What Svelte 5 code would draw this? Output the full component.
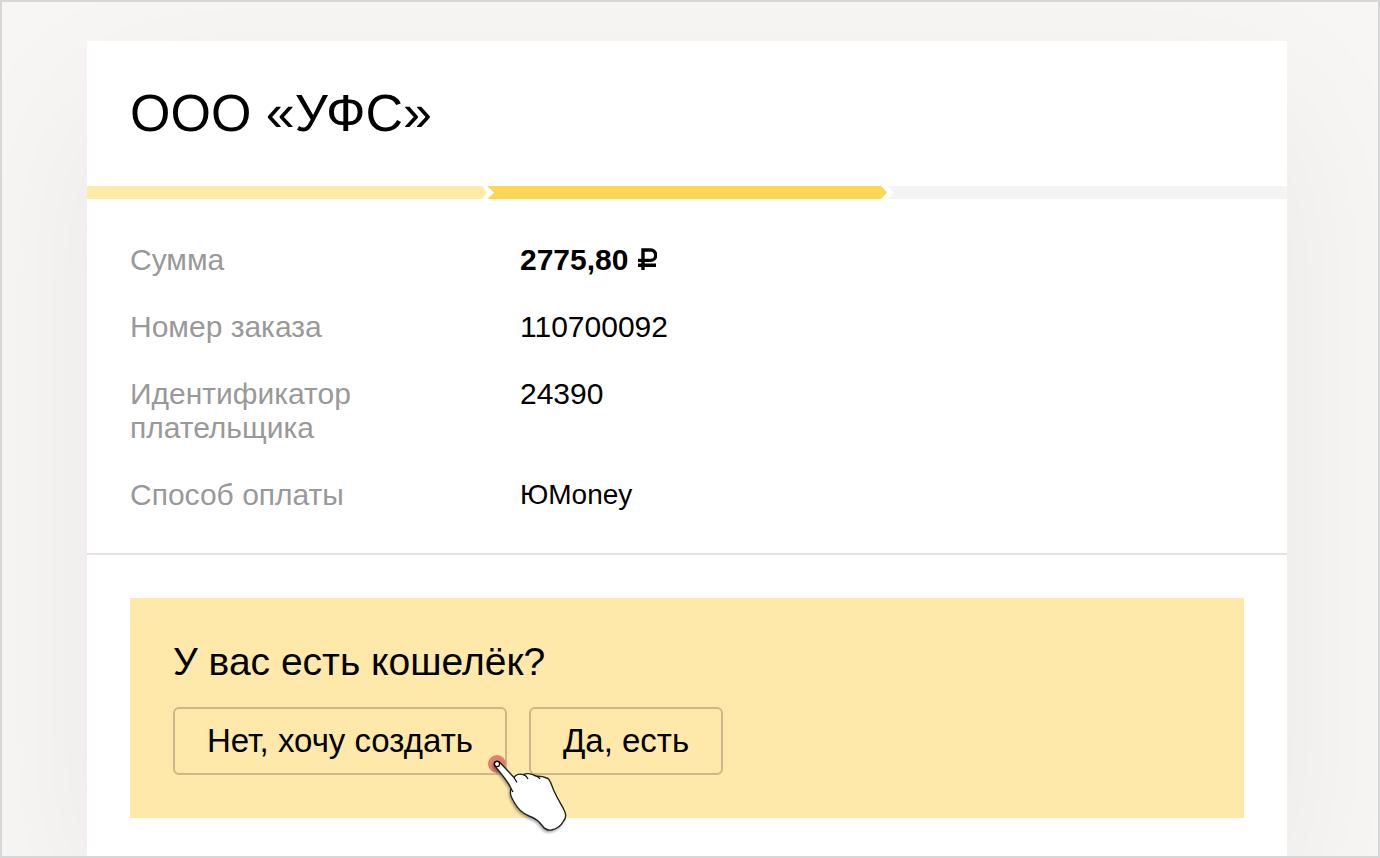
<script lang="ts">
	type Row = {
		label: string;
		value: string;
		kind?: string;
	};

	const rows: Array<Row> = [
		{ label: 'Сумма', value: '2775,80', kind: 'sum' },
		{ label: 'Номер заказа', value: '110700092' },
		{ label: 'Идентификатор плательщика', value: '24390' },
		{ label: 'Способ оплаты', value: 'ЮMoney', kind: 'method' }
	];
</script>

<div class="page">
	<main class="card">
		<header>
			<h1>ООО «УФС»</h1>
		</header>

		<div class="steps">
			<span class="step done"></span>
			<span class="step current"></span>
			<span class="step"></span>
		</div>

		<dl>
			{#each rows as row (row.label)}
				<dt>{row.label}</dt>
				<dd class={row.kind}>
					{row.value}
					{#if row.kind === 'sum'}
						<svg class="ruble" viewBox="0 0 20 22" role="img" aria-label="₽">
							<path d="M6 22V2h7.500a5.200 5.200 0 0 1 0 10.400H1M1 17.200h18" />
						</svg>
					{/if}
				</dd>
			{/each}
		</dl>

		<section>
			<div class="question">
				<h2>У вас есть кошелёк?</h2>
				<div class="answers">
					<div class="target">
						<button type="button">Нет, хочу создать</button>
						<svg class="pointer" viewBox="0 0 90 90" aria-hidden="true">
							<circle cx="17" cy="14" r="9" fill="#de826c" />
							<path
								class="hand"
								d="M15 16C12.500 12.500 17 9 20.500 13L34 27.500C36 24.500 40 23.500 43.500 24.700C47 22.500 52 24 56 26C60 26 65 27 68 28.500C71 31 71.500 36 75 43C78 50 82 55 84.500 61C86.500 65 86 68 83.500 71C81 76 76 79 71.500 80C68 80.500 65 79.500 62.500 76C59 71 55 68 49 66C42 63 37 58 34 52C31 47 29.500 44 31 38.500C28 31 20 23 15 16Z"
							/>
							<path
								class="line"
								d="M34 27.500L37 32.500M43.500 24.700Q46.500 26 48 29M56 26Q59 27 60 29M31 38.500L33 42"
							/>
							<circle class="line" cx="17" cy="14" r="2.6" />
						</svg>
					</div>
					<button type="button">Да, есть</button>
				</div>
			</div>
		</section>
	</main>
</div>

<style>
	:global(body) {
		margin: 0;
		font-family: 'Liberation Sans', Arial, sans-serif;
		color: #000;
	}

	.page {
		box-sizing: border-box;
		display: flex;
		min-height: 100vh;
		padding: 39px 91px 0 85px;
		overflow: hidden;
		border: 2px solid #d7d7d7;
		background: #f7f6f4;
	}

	.card {
		flex: 1;
		background: #fff;
		box-shadow: 0 60px 160px rgba(0, 0, 0, 0.06);
	}

	header {
		padding: 43px;
	}

	h1 {
		margin: 0;
		font-size: 52px;
		font-weight: normal;
		line-height: 59px;
	}

	.steps {
		display: flex;
	}

	.step {
		flex: 1;
		height: 13px;
		background: #f5f4f3;
		clip-path: polygon(0 0, 100% 0, 100% 100%, 0 100%, 7px 50%);
	}

	.step.done {
		background: #ffeba8;
		clip-path: polygon(0 0, calc(100% - 5px) 0, 100% 50%, calc(100% - 5px) 100%, 0 100%);
	}

	.step.current {
		background: #fbd755;
		clip-path: polygon(0 0, calc(100% - 6px) 0, 100% 50%, calc(100% - 6px) 100%, 0 100%, 7px 50%);
	}

	dl {
		display: grid;
		grid-template-columns: 260px 1fr;
		gap: 33px 130px;
		margin: 0;
		padding: 44px 43px 41px;
		border-bottom: 2px solid #e4e4e4;
		font-size: 30px;
		line-height: 34px;
	}

	dt {
		color: #999;
	}

	dd {
		margin: 0;
	}

	.sum {
		font-weight: bold;
	}

	.method {
		font-size: 28px;
	}

	.ruble {
		width: 20px;
		height: 22px;
		fill: none;
		stroke: #000;
		stroke-width: 3.4;
	}

	section {
		padding: 43px 43px 36px;
	}

	.question {
		padding: 43px;
		background: #fee9ab;
	}

	h2 {
		margin: 0 0 24px;
		font-size: 39px;
		font-weight: normal;
		line-height: 42px;
	}

	.answers {
		display: flex;
		gap: 22px;
	}

	.target {
		position: relative;
	}

	button {
		height: 68px;
		padding: 0 32px;
		border: 2px solid #ccb986;
		border-radius: 6px;
		background: transparent;
		color: #000;
		font-family: inherit;
		font-size: 33px;
		cursor: pointer;
	}

	.pointer {
		position: absolute;
		z-index: 1;
		right: -63px;
		bottom: -65px;
		width: 90px;
		height: 90px;
		pointer-events: none;
	}

	.hand {
		fill: #fff;
		stroke: #222;
		stroke-width: 1.4;
		stroke-linejoin: round;
		filter: drop-shadow(-1px 2px 1px rgba(0, 0, 0, 0.3));
	}

	.line {
		fill: none;
		stroke: #111;
		stroke-width: 1.3;
	}
</style>
